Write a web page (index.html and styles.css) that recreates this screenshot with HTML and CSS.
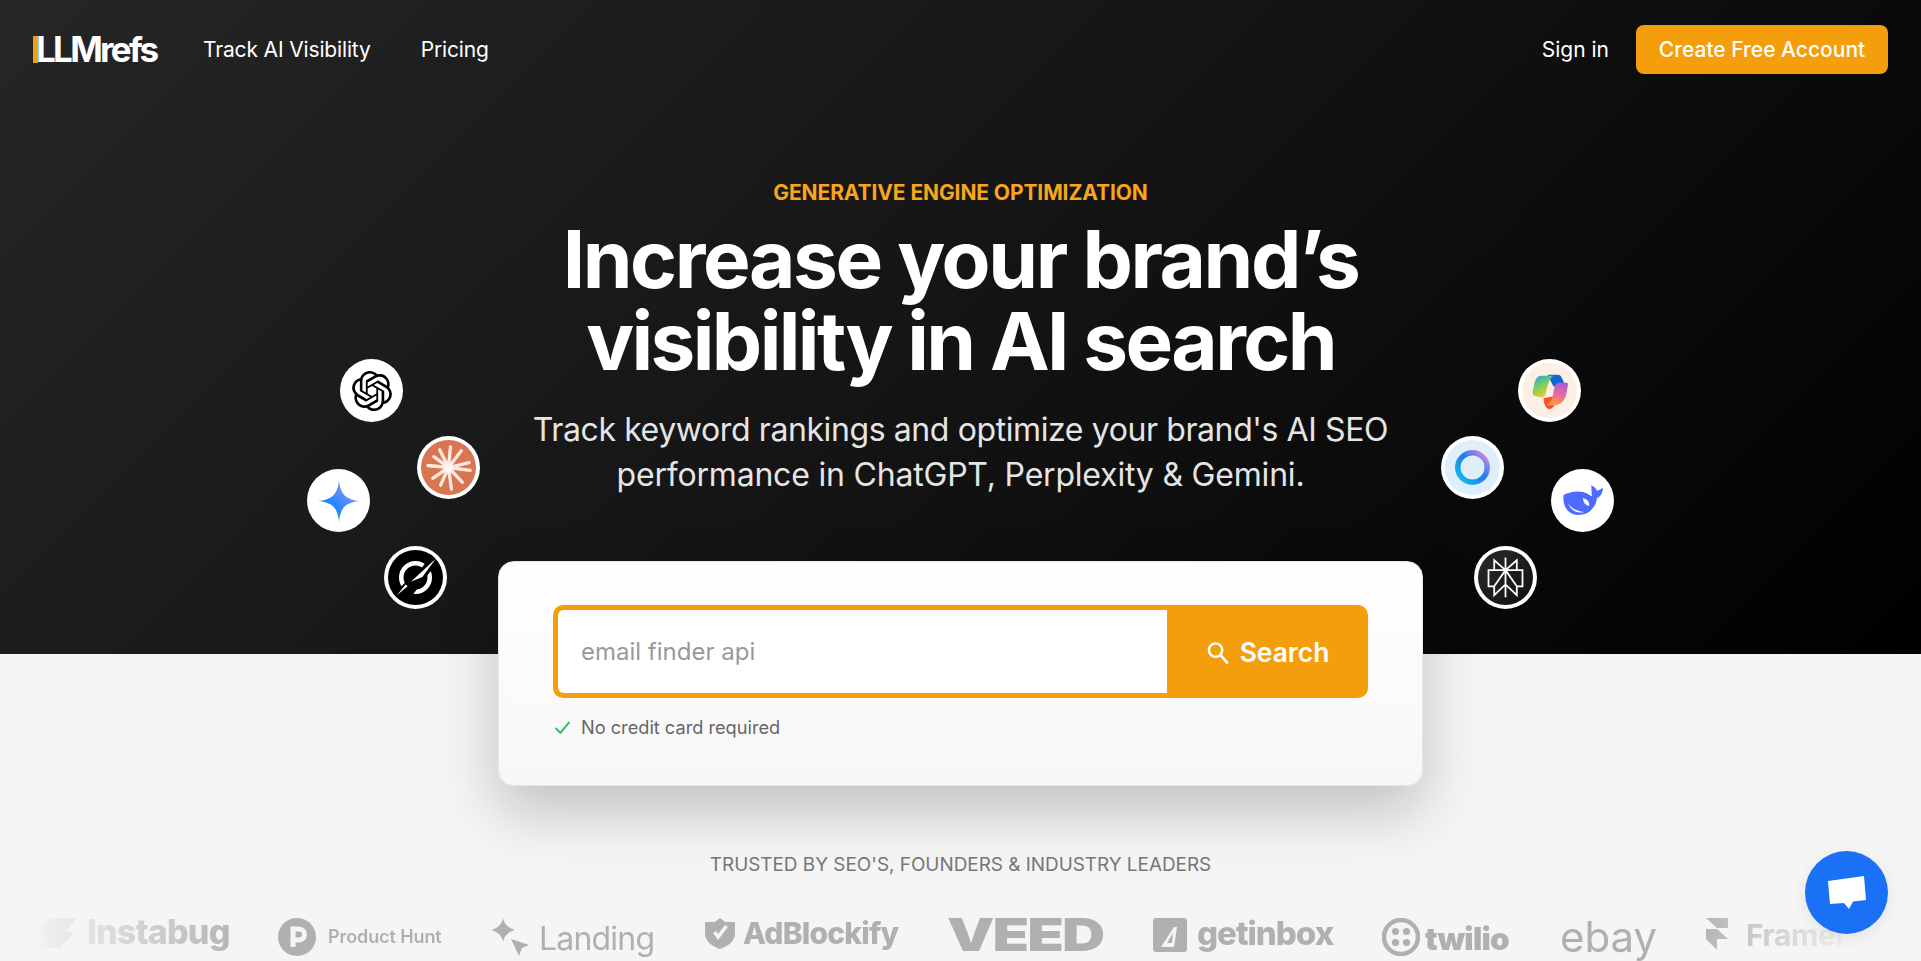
FILE: index.html
```html
<!DOCTYPE html>
<html lang="en">
<head>
<meta charset="utf-8">
<title>LLMrefs</title>
<link rel="stylesheet" href="styles.css">
</head>
<body>
<div class="page">
  <section class="hero">
    <header class="nav">
      <a class="logo">LLMrefs</a>
      <nav class="nav-links"><a>Track AI Visibility</a><a>Pricing</a></nav>
      <div class="nav-actions"><a class="sign-in">Sign in</a><a class="cta">Create Free Account</a></div>
    </header>

    <div class="hero-copy">
      <p class="eyebrow">GENERATIVE ENGINE OPTIMIZATION</p>
      <h1>Increase your brand’s<br><span class="h1-second">visibility in AI search</span></h1>
      <p class="sub">Track keyword rankings and optimize your brand's AI SEO<br><span class="sub-second">performance in ChatGPT, Perplexity &amp; Gemini.</span></p>
    </div>

    <div class="bubble b-openai">
      <svg viewBox="0 0 24 24" class="i40"><path fill="#000" d="M22.2819 9.8211a5.9847 5.9847 0 0 0-.5157-4.9108 6.0462 6.0462 0 0 0-6.5098-2.9A6.0651 6.0651 0 0 0 4.9807 4.1818a5.9847 5.9847 0 0 0-3.9977 2.9 6.0462 6.0462 0 0 0 .7427 7.0966 5.98 5.98 0 0 0 .511 4.9107 6.051 6.051 0 0 0 6.5146 2.9001A5.9847 5.9847 0 0 0 13.2599 24a6.0557 6.0557 0 0 0 5.7718-4.2058 5.9894 5.9894 0 0 0 3.9977-2.9001 6.0557 6.0557 0 0 0-.7475-7.0729zm-9.022 12.6081a4.4755 4.4755 0 0 1-2.8764-1.0408l.1419-.0804 4.7783-2.7582a.7948.7948 0 0 0 .3927-.6813v-6.7369l2.02 1.1686a.071.071 0 0 1 .038.052v5.5826a4.504 4.504 0 0 1-4.4945 4.4944zm-9.6607-4.1254a4.4708 4.4708 0 0 1-.5346-3.0137l.142.0852 4.783 2.7582a.7712.7712 0 0 0 .7806 0l5.8428-3.3685v2.3324a.0804.0804 0 0 1-.0332.0615L9.74 19.9502a4.4992 4.4992 0 0 1-6.1408-1.6464zM2.3408 7.8956a4.485 4.485 0 0 1 2.3655-1.9728V11.6a.7664.7664 0 0 0 .3879.6765l5.8144 3.3543-2.0201 1.1685a.0757.0757 0 0 1-.071 0l-4.8303-2.7865A4.504 4.504 0 0 1 2.3408 7.872zm16.5963 3.8558L13.1038 8.364 15.1192 7.2a.0757.0757 0 0 1 .071 0l4.8303 2.7913a4.4944 4.4944 0 0 1-.6765 8.1042v-5.6772a.79.79 0 0 0-.407-.667zm2.0107-3.0231l-.142-.0852-4.7735-2.7818a.7759.7759 0 0 0-.7854 0L9.409 9.2297V6.8974a.0662.0662 0 0 1 .0284-.0615l4.8303-2.7866a4.4992 4.4992 0 0 1 6.6802 4.66zM8.3065 12.863l-2.02-1.1638a.0804.0804 0 0 1-.038-.0567V6.0742a4.4992 4.4992 0 0 1 7.3757-3.4537l-.142.0805L8.704 5.459a.7948.7948 0 0 0-.3927.6813zm1.0976-2.3654l2.602-1.4998 2.6069 1.4998v2.9994l-2.5974 1.4997-2.6067-1.4997Z"/></svg>
    </div>
    <div class="bubble b-claude">
      <svg viewBox="0 0 56 56" class="i56"><circle cx="28" cy="28" r="28" fill="#d97550"/><g stroke="#fbe9df" stroke-width="3.4" stroke-linecap="round"><path d="M28 28L19 10M28 28L30 7M28 28L41 11M28 28L49 23M28 28L50 31M28 28L42 43M28 28L31 50M28 28L20 46M28 28L12 39M28 28L7 26M28 28L13 17"/></g><circle cx="28" cy="28" r="5" fill="#fff4ee"/></svg>
    </div>
    <div class="bubble b-gemini">
      <svg viewBox="0 0 42 42" class="i42"><defs><linearGradient id="gem" x1="0" y1="1" x2="1" y2="0"><stop offset=".35" stop-color="#1a86ff"/><stop offset="1" stop-color="#b79cf5"/></linearGradient></defs><path fill="url(#gem)" d="M21 0C22 14 28 20 42 21C28 22 22 28 21 42C20 28 14 22 0 21C14 20 20 14 21 0Z"/></svg>
    </div>
    <div class="bubble b-grok">
      <svg viewBox="0 0 56 56" class="i56"><circle cx="28" cy="28" r="28" fill="#000"/><circle cx="28" cy="28" r="14.5" fill="none" stroke="#fff" stroke-width="4.6"/><path fill="#000" d="M13 47L42 8L50 13L24 47Z"/><path fill="#000" d="M9 42L26 24L30 32L14 50Z"/><path fill="#fff" d="M23.3 32.4L48.8 8.700L35 27.500Z"/><path fill="#fff" d="M9 46L18 35L20 37Z"/></svg>
    </div>

    <div class="bubble b-copilot">
      <svg viewBox="0 0 56 56" class="i56"><defs><linearGradient id="cp1" x1="0" y1="0" x2=".5" y2="1"><stop offset="0" stop-color="#12a4ea"/><stop offset=".55" stop-color="#7fd15c"/><stop offset="1" stop-color="#f7c531"/></linearGradient><linearGradient id="cp2" x1=".6" y1="0" x2=".4" y2="1"><stop offset="0" stop-color="#a85bd8"/><stop offset=".55" stop-color="#ea6e92"/><stop offset="1" stop-color="#fa9a3c"/></linearGradient></defs><circle cx="28" cy="28" r="28" fill="#fcefe4"/><path fill="#1367d4" d="M26 12h10c3 0 4 2 5 4l3 7-12 1z"/><path fill="#f2552c" d="M22 36l9-2 5 2c0 3-4 11-8 11-4 0-6-6-6-11z"/><path fill="url(#cp1)" d="M20 13H33C28 15 27 20 25 27C24 33 23 35 20 35L12 33C10 32 11 28 12 24C13 18 15 13 20 13Z"/><path fill="url(#cp2)" d="M38 20H46C47 20 47 22 46 27C45 35 42 42 34 43H24C29 42 31 36 32 30C33 24 34 20 38 20Z"/></svg>
    </div>
    <div class="bubble b-ring">
      <svg viewBox="0 0 56 56" class="i56"><defs><linearGradient id="ring" x1="0" y1="1" x2="1" y2="0"><stop offset="0" stop-color="#14c3e8"/><stop offset=".55" stop-color="#1b7cf0"/><stop offset="1" stop-color="#ef8ad8"/></linearGradient></defs><circle cx="28" cy="28" r="28" fill="#dfeefb"/><circle cx="28" cy="28" r="15" fill="none" stroke="url(#ring)" stroke-width="5.6"/></svg>
    </div>
    <div class="bubble b-deepseek">
      <svg viewBox="0 0 40 31" class="whale"><path fill="#4d6bfe" d="M.5 10C8 6 18 5 25 9C27 10.500 28 11 29 11C28 6 29 2 28 0C31 1.500 33 3 34 6C36 5 38 4 40 3C40 8 37 12 34 13C33.500 17 32 21 29 24C27 27 22 30 14 30C5 29-.5 22 .5 10Z"/><path fill="#fff" d="M5 18C8 23 13 26 21 27C15 29 8 26 5 18ZM20 13C24 14 27 17 26 21C22 20 20 17 20 13Z"/></svg>
    </div>
    <div class="bubble b-perplexity">
      <svg viewBox="0 0 56 56" class="i56"><defs><linearGradient id="perp" x1="0" y1="0" x2="1" y2="1"><stop offset="0" stop-color="#2a2a2a"/><stop offset="1" stop-color="#111"/></linearGradient></defs><circle cx="28" cy="28" r="28" fill="url(#perp)"/><g fill="none" stroke="#fff" stroke-width="1.800"><path d="M28 7.700V48M16.500 20.500V10.400L28 20.500L39.500 10.400V20.500M10.700 20.500H45.300V37H39.500V46L28 35L16.500 46V37H10.700ZM16.500 37L28 20.500L39.500 37"/></g></svg>
    </div>

    <form class="card">
      <div class="search">
        <input class="search-input" type="text" placeholder="email finder api">
        <button class="search-btn" type="button">
          <svg viewBox="0 0 24 24" class="search-icon"><circle cx="10" cy="10" r="7" fill="none" stroke="#fff" stroke-width="2.600"/><path d="M15 15L22 23" stroke="#fff" stroke-width="2.800" stroke-linecap="round"/></svg>
          Search
        </button>
      </div>
      <p class="note"><svg viewBox="0 0 16 16" class="check"><path d="M1.500 8.500L6 13L14.500 3" fill="none" stroke="#22c55e" stroke-width="1.800"/></svg>No credit card required</p>
    </form>
  </section>

  <section class="trusted">
    <p class="trusted-label">TRUSTED BY SEO'S, FOUNDERS &amp; INDUSTRY LEADERS</p>
    <div class="logos">
      <div class="logo-item w-instabug">
        <svg viewBox="0 0 40 30" class="l-instabug"><path fill="#b0b0b0" d="M12 0H40L30 14H38L24 30H0L8 18H0Z"/></svg>
        <span class="t-instabug">Instabug</span>
      </div>
      <div class="logo-item w-ph">
        <svg viewBox="0 0 38 38" class="l-38"><circle cx="19" cy="19" r="19" fill="#b0b0b0"/><path fill="none" stroke="#f5f5f5" stroke-width="5" d="M15 29V11h6a5.500 5.500 0 0 1 0 11h-6"/></svg>
        <span class="t-ph">Product Hunt</span>
      </div>
      <div class="logo-item w-landing">
        <svg viewBox="0 0 38 38" class="l-landing"><path fill="#b0b0b0" d="M12 0C13 6 17 10 24 12C17 14 13 18 12 24C11 18 7 14 0 12C7 10 11 6 12 0Z"/><path fill="#b0b0b0" d="M20 21L38 27L31 30L28 38Z"/></svg>
        <span class="t-landing">Landing</span>
      </div>
      <div class="logo-item w-adblockify">
        <svg viewBox="0 0 30 31" class="l-shield"><path fill="#b0b0b0" fill-rule="evenodd" d="M15 0L20 4L30 4V16C30 23 22 29 15 31C8 29 0 23 0 16V4L10 4ZM8 15L13 22L23 9L20 7L13 16L11 13Z"/></svg>
        <span class="t-adblockify">AdBlockify</span>
      </div>
      <div class="logo-item w-veed"><span class="t-veed">VEED</span></div>
      <div class="logo-item w-getinbox">
        <svg viewBox="0 0 34 34" class="l-box"><rect width="34" height="34" rx="3" fill="#b0b0b0"/><path fill="#f5f5f5" d="M8 29L21 9H24L21 29Z"/><path fill="#b0b0b0" d="M14 25L20 15L19 25Z"/></svg>
        <span class="t-getinbox">getinbox</span>
      </div>
      <div class="logo-item w-twilio">
        <svg viewBox="0 0 38 38" class="l-twilio"><circle cx="19" cy="19" r="17" fill="none" stroke="#b0b0b0" stroke-width="4.500"/><circle cx="13.500" cy="13.500" r="3.600" fill="#b0b0b0"/><circle cx="24.500" cy="13.500" r="3.600" fill="#b0b0b0"/><circle cx="13.500" cy="24.500" r="3.600" fill="#b0b0b0"/><circle cx="24.500" cy="24.500" r="3.600" fill="#b0b0b0"/></svg>
        <span class="t-twilio">twilio</span>
      </div>
      <div class="logo-item w-ebay"><span class="t-ebay">ebay</span></div>
      <div class="logo-item w-framer">
        <svg viewBox="0 0 22 32" class="l-framer"><path fill="#b0b0b0" d="M0 0H22V10H11ZM0 11H11L22 21H11V32L0 21Z"/></svg>
        <span class="t-framer">Framer</span>
      </div>
    </div>
  </section>

  <button class="chat" type="button" aria-label="Chat">
    <svg viewBox="0 0 38 33" class="chat-icon"><path fill="#fff" d="M0 5L36 0L38 24L25 25.500L21 33L16 27L2 28Z"/></svg>
  </button>
</div>
</body>
</html>
```
FILE: styles.css
```css
* { box-sizing: border-box; }
html, body { margin: 0; padding: 0; }
body { font-family: "Inter", "Liberation Sans", sans-serif; background: #f5f5f5; color: #fff; }
p, h1 { margin: 0; }

.page { position: relative; height: 961px; overflow: hidden; }

.hero {
  position: relative;
  display: flex;
  flex-direction: column;
  align-items: center;
  height: 654px;
  background: linear-gradient(135deg, #262626 0%, #141414 50%, #000 100%);
}

.nav {
  display: flex;
  align-items: center;
  width: 100%;
  height: 99px;
  padding: 0 33px;
}
.logo {
  font-size: 35px;
  font-weight: 700;
  letter-spacing: -2.700px;
  line-height: 27px;
  text-indent: -2px;
  color: #fff;
  border-left: 5px solid #f59e0b;
  width: 127px;
}
.nav-links { display: flex; gap: 50px; margin-left: 43px; font-size: 21px; letter-spacing: -.15px; }
.nav-actions { display: flex; align-items: center; margin-left: auto; font-size: 21px; }
.sign-in { margin-right: 27px; }
.cta {
  display: flex;
  align-items: center;
  justify-content: center;
  width: 252px;
  height: 49px;
  background: #f59e0b;
  border-radius: 8px;
  color: #fff;
  font-weight: 500;
}

.hero-copy { display: flex; flex-direction: column; align-items: center; text-align: center; margin-top: 82px; }
.eyebrow { font-size: 21px; line-height: 24px; font-weight: 700; color: #f9a61a; letter-spacing: -.1px; }
h1 { font-size: 80px; line-height: 82px; font-weight: 700; letter-spacing: -2.400px; margin-top: 13px; }
.h1-second { letter-spacing: -2.600px; }
.sub { font-size: 32px; line-height: 45px; color: #e5e5e5; margin-top: 25px; letter-spacing: -.4px; }
.sub-second { letter-spacing: -.2px; }

.bubble {
  position: absolute;
  width: 63px;
  height: 63px;
  border-radius: 50%;
  background: #fff;
  display: flex;
  align-items: center;
  justify-content: center;
}
.i40 { width: 40px; height: 40px; }
.i42 { width: 42px; height: 42px; }
.i56 { width: 55px; height: 55px; }
.whale { width: 40px; height: 31px; }
.b-openai { left: 340px; top: 359px; }
.b-claude { left: 417px; top: 436px; }
.b-gemini { left: 307px; top: 469px; }
.b-grok { left: 384px; top: 546px; }
.b-copilot { left: 1518px; top: 359px; }
.b-ring { left: 1441px; top: 436px; }
.b-deepseek { left: 1551px; top: 469px; }
.b-perplexity { left: 1474px; top: 546px; }

.card {
  width: 925px;
  height: 225px;
  margin-top: auto;
  margin-bottom: -132px;
  padding: 43px 54px;
  border: 1px solid #e8e8e8;
  border-radius: 16px;
  background: linear-gradient(180deg, #fff 0%, #f7f7f7 100%);
  box-shadow: 0 25px 60px rgba(0,0,0,.22);
  position: relative;
  color: #666;
}
.search { display: flex; height: 93px; border: 5px solid #f59e0b; border-radius: 10px; background: #f59e0b; overflow: hidden; }
.search-input {
  flex: 1;
  min-width: 0;
  border: 0;
  outline: 0;
  padding: 0 23px;
  font: 400 24px "Inter", sans-serif;
  background: #fff;
  border-radius: 5px 0 0 5px;
}
.search-input::placeholder { color: #999; opacity: 1; }
.search-btn {
  width: 196px;
  flex: none;
  display: flex;
  align-items: center;
  justify-content: center;
  gap: 11px;
  border: 0;
  padding: 0 0 0 5px;
  background: #f59e0b;
  color: #fff;
  font: 600 26.400px "Inter", sans-serif;
}
.search-icon { width: 23px; height: 24px; }
.note { display: flex; align-items: center; gap: 10px; margin: 17px 0 0 1px; font-size: 18.200px; line-height: 24px; color: #666; }
.check { width: 17px; height: 17px; }

.trusted { display: flex; flex-direction: column; align-items: center; }
.trusted-label { margin-top: 198px; font-size: 18.900px; line-height: 26px; color: #777; }
.logos {
  display: flex;
  align-items: flex-start;
  gap: 50px;
  width: 100%;
  margin-top: 40px;
  padding-left: 36px;
  color: #b0b0b0;
  -webkit-mask-image: linear-gradient(90deg, transparent 30px, #000 250px, #000 1690px, transparent 1860px);
  mask-image: linear-gradient(90deg, transparent 30px, #000 250px, #000 1690px, transparent 1860px);
}
.logo-item { display: flex; flex: none; align-items: flex-start; white-space: nowrap; height: 43px; }
.w-instabug { width: 192px; }
.w-ph { width: 163px; }
.w-landing { width: 164px; }
.w-adblockify { width: 192px; }
.w-veed { width: 156px; }
.w-getinbox { width: 179px; }
.w-twilio { width: 128px; }
.w-ebay { width: 96px; }
.w-framer { width: 142px; }
.l-instabug { width: 40px; height: 30px; margin-right: 11px; flex: none; }
.l-38 { width: 38px; height: 38px; margin-right: 12px; flex: none; }
.l-landing { width: 38px; height: 38px; margin-right: 10px; flex: none; }
.l-twilio { width: 38px; height: 38px; margin-right: 5px; flex: none; }
.l-shield { width: 30px; height: 31px; margin-right: 8px; flex: none; }
.l-box { width: 34px; height: 34px; margin-right: 10px; flex: none; }
.l-framer { width: 22px; height: 32px; margin-right: 18px; flex: none; }
.t-instabug { font-size: 34px; line-height: 34px; font-weight: 800; letter-spacing: -.8px; margin-top: -3px; }
.t-ph { font-size: 18px; line-height: 38px; font-weight: 600; letter-spacing: -.1px; }
.t-landing { font-size: 32px; line-height: 41px; font-weight: 400; letter-spacing: -.8px; }
.t-adblockify { font-size: 30px; line-height: 31px; font-weight: 800; letter-spacing: -.8px; }
.t-veed { display: block; font-size: 45px; line-height: 45px; font-weight: 900; letter-spacing: -1.500px; margin-top: -6px; transform: scaleX(1.33); transform-origin: 0 50%; }
.t-getinbox { font-size: 33px; line-height: 33px; font-weight: 800; letter-spacing: -1px; margin-top: -1px; }
.t-twilio { font-size: 31.500px; line-height: 42px; font-weight: 900; letter-spacing: -.8px; }
.t-ebay { font-size: 42px; line-height: 42px; font-weight: 400; letter-spacing: 0; margin-top: -2px; }
.t-framer { font-size: 30px; line-height: 34px; font-weight: 700; letter-spacing: -.4px; }

.chat {
  position: absolute;
  left: 1805px;
  top: 851px;
  width: 83px;
  height: 83px;
  border: 0;
  padding: 0;
  border-radius: 50%;
  background: #1a71f6;
  box-shadow: 0 4px 16px rgba(0,0,0,.08);
  display: flex;
  align-items: center;
  justify-content: center;
}
.chat-icon { width: 38px; height: 33px; }
```
